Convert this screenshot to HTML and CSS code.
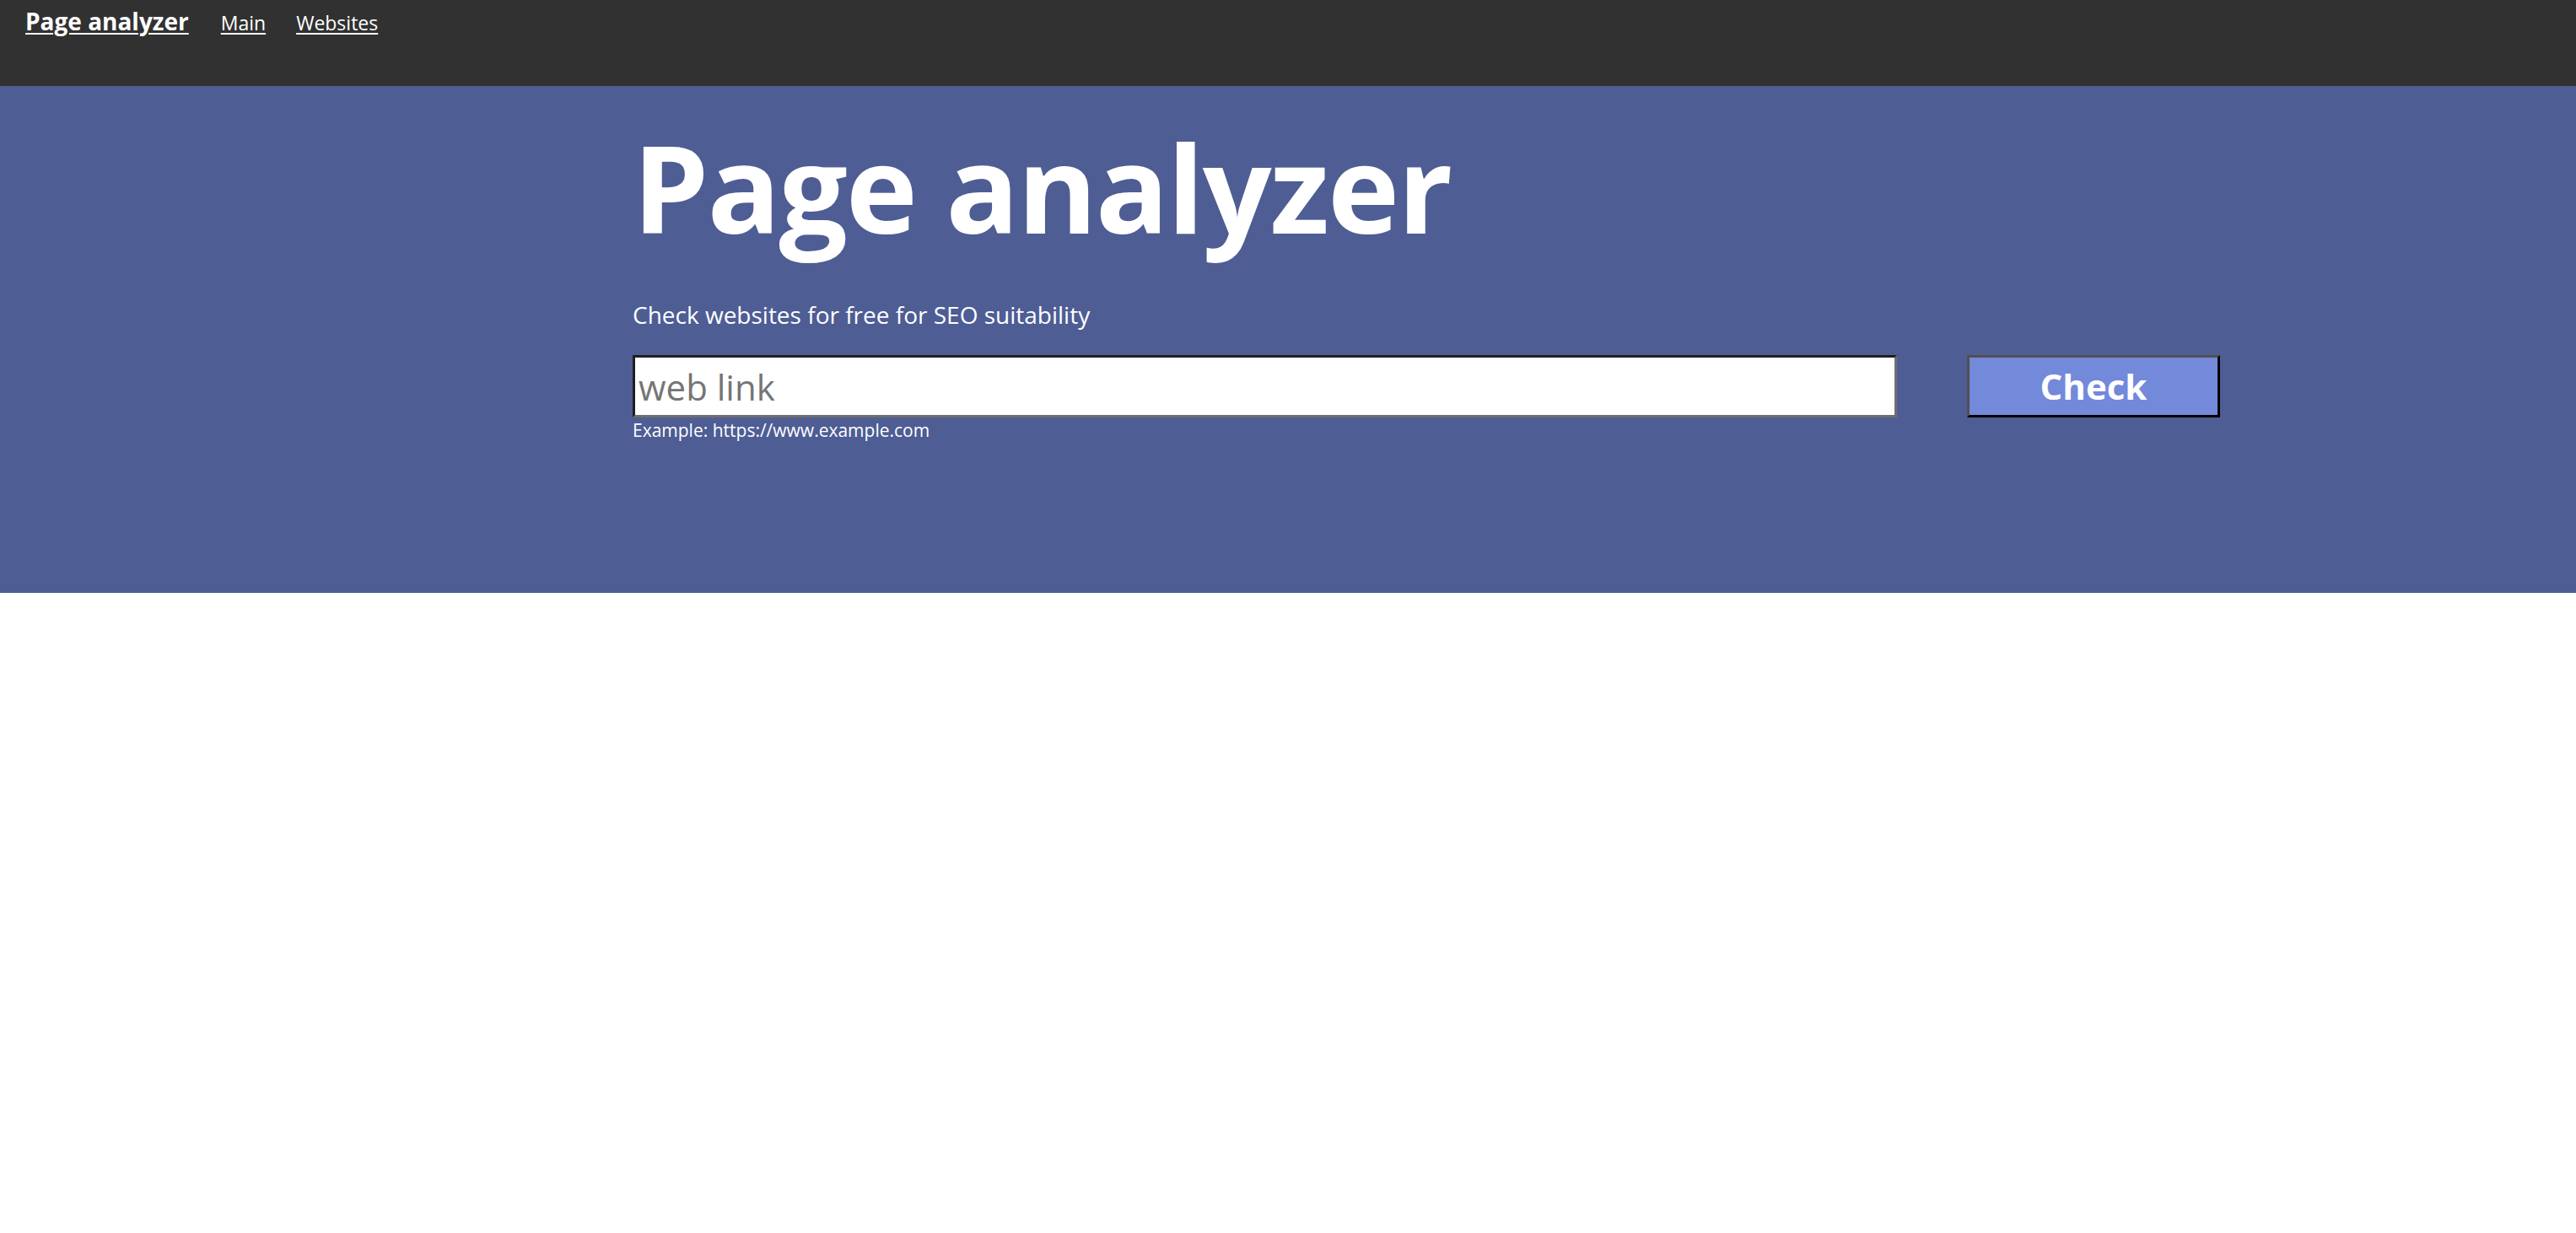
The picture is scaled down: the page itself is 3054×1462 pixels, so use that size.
FILE: index.html
```html
<!DOCTYPE html>
<html lang="en">
<head>
<meta charset="utf-8">
<title>Page analyzer</title>
<link rel="stylesheet" href="styles.css">
</head>
<body>
<header class="navbar">
  <a class="brand" href="#">Page analyzer</a>
  <nav class="nav-links">
    <a class="nav-link" href="#">Main</a>
    <a class="nav-link" href="#">Websites</a>
  </nav>
</header>
<main class="hero">
  <div class="hero-inner">
    <h1 class="title">Page analyzer</h1>
    <p class="lead">Check websites for free for SEO suitability</p>
    <form class="check-form" action="#">
      <div class="field">
        <input class="url-input" type="text" placeholder="web link">
        <div class="hint">Example: https://www.example.com</div>
      </div>
      <button class="check-btn" type="submit">Check</button>
    </form>
  </div>
</main>
</body>
</html>
```

FILE: styles.css
```css
html, body {
  margin: 0;
  padding: 0;
  background: #ffffff;
  font-family: "Open Sans", "Noto Sans", sans-serif;
}

.navbar {
  height: 102px;
  box-sizing: border-box;
  background: #313131;
  display: flex;
  align-items: baseline;
  padding: 0 0 0 30px;
}

.brand {
  color: #ffffff;
  font-weight: 700;
  font-size: 28px;
  line-height: 50px;
  text-decoration: underline;
  text-underline-offset: 3px;
  text-decoration-thickness: 2px;
}

.nav-links {
  display: flex;
  gap: 36px;
  margin-left: 38px;
}

.nav-link {
  color: #ffffff;
  font-size: 23px;
  line-height: 50px;
  text-decoration: underline;
  text-underline-offset: 3px;
  text-decoration-thickness: 2px;
}

.hero {
  background: #4e5d94;
  height: 601px;
  box-sizing: border-box;
  padding-top: 47px;
}

.hero-inner {
  margin-left: 750px;
  color: #ffffff;
}

.title {
  margin: 0;
  font-size: 144px;
  line-height: 144px;
  font-weight: 700;
  letter-spacing: -2px;
}

.lead {
  margin: 63px 0 0 0;
  font-size: 28px;
  line-height: 34px;
}

.check-form {
  display: flex;
  align-items: flex-start;
  gap: 83px;
  margin-top: 31px;
}

.field {
  display: flex;
  flex-direction: column;
}

.url-input {
  width: 1499px;
  height: 74px;
  box-sizing: border-box;
  margin: 0;
  padding: 0 4px;
  border-style: solid;
  border-width: 3px;
  border-color: #1f1f1f #6e6e6e #6e6e6e #1f1f1f;
  background: #ffffff;
  font-family: "Open Sans", "Noto Sans", sans-serif;
  font-size: 42px;
  color: #222;
  outline: none;
}

.url-input::placeholder {
  color: #757575;
}

.hint {
  margin-top: 3px;
  font-size: 21px;
  line-height: 25px;
}

.check-btn {
  width: 300px;
  height: 74px;
  box-sizing: border-box;
  margin: 0;
  padding: 0;
  border-style: solid;
  border-width: 3px;
  border-color: #505050 #000000 #000000 #505050;
  background: #7389d9;
  color: #ffffff;
  font-family: "Open Sans", "Noto Sans", sans-serif;
  font-weight: 700;
  font-size: 42px;
  line-height: 1;
  cursor: pointer;
}
```
